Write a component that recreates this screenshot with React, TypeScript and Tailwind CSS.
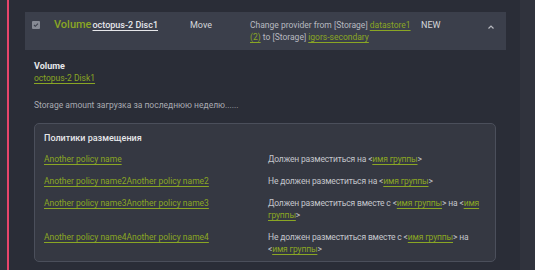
import React from 'react';

const Link = ({ children }: { children: React.ReactNode }) => (
  <a href="#" className="text-[#8aa624] underline underline-offset-2 decoration-[#8aa624]">
    {children}
  </a>
);

const Group = () => (
  <>
    &lt;<Link>имя группы</Link>&gt;
  </>
);

const policies = [
  { name: 'Another policy name', rule: <>Должен разместиться на <Group /></> },
  { name: 'Another policy name2Another policy name2', rule: <>Не должен разместиться на <Group /></> },
  { name: 'Another policy name3Another policy name3', rule: <>Должен разместиться вместе с <Group /> на <Group /></> },
  { name: 'Another policy name4Another policy name4', rule: <>Не должен разместиться вместе с <Group /> на <Group /></> },
];

const App = () => {
  return (
    <div className="w-[535px] h-[270px] overflow-hidden flex bg-[#2a2d37] text-[8.5px] leading-[12px] text-[#c4c6cc]" style={{ fontFamily: 'Roboto, "Noto Sans", sans-serif' }}>
      <div className="w-[7px] bg-[#30333d]" />
      <div className="w-[2px] bg-[#e8456b]" />
      <div className="w-[16px]" />
      <div className="w-[481px] pt-[12px] flex flex-col">
        <div className="h-[38px] bg-[#3b3f4b] flex items-start pt-[7px] pl-[7px]">
          <div className="w-[8px] h-[8px] mt-[2px] rounded-[1px] bg-[#868a94] flex items-center justify-center">
            <svg width="6" height="6" viewBox="0 0 6 6"><path d="M1 3l1.3 1.3L5 1.6" stroke="#3b3f4b" strokeWidth="1.1" fill="none" /></svg>
          </div>
          <div className="ml-[14px] w-[136px] flex items-baseline -mt-[1px] gap-[1px]">
            <span className="text-[11px] leading-[14px] font-medium text-[#8aa624]">Volume</span>
            <a href="#" className="text-[9px] text-[#e6e7ea] underline underline-offset-2 font-medium">octopus-2 Disc1</a>
          </div>
          <div className="w-[60px] text-[9px] text-[#d4d6da]">Move</div>
          <div className="w-[171px] text-[#b8bac0]">
            Change provider from [Storage] <Link>datastore1 (2)</Link> to [Storage] <Link>igors-secondary</Link>
          </div>
          <div className="w-[66px] text-[9px] text-[#d4d6da]">NEW</div>
          <svg width="8" height="6" viewBox="0 0 8 6" className="mt-[5px]"><path d="M1.5 4.5L4 2l2.5 2.5" stroke="#b8bac0" strokeWidth="1.2" fill="none" /></svg>
        </div>
        <div className="pl-[9px] pr-[10px] pt-[10px]">
          <div className="text-[9px] font-bold text-[#e6e7ea]">Volume</div>
          <div><Link>octopus-2 Disk1</Link></div>
          <div className="mt-[15px] text-[#a9abb2]">Storage amount загрузка за последнюю неделю......</div>
          <div className="mt-[12px] h-[139px] border border-[#4b4f5b] rounded-[5px] bg-[#353842] px-[9px] pt-[8px]">
            <div className="text-[9px] font-medium text-[#e6e7ea]">Политики размещения</div>
            <div className="mt-[9px] flex flex-col gap-[10px]">
              {policies.map((p) => (
                <div key={p.name} className="flex">
                  <div className="w-[224px] shrink-0"><Link>{p.name}</Link></div>
                  <div className="w-[226px] tracking-[-0.15px]">{p.rule}</div>
                </div>
              ))}
            </div>
          </div>
        </div>
      </div>
      <div className="w-[14px]" />
      <div className="flex-1 bg-[#30333d]" />
    </div>
  );
};

export default App;
